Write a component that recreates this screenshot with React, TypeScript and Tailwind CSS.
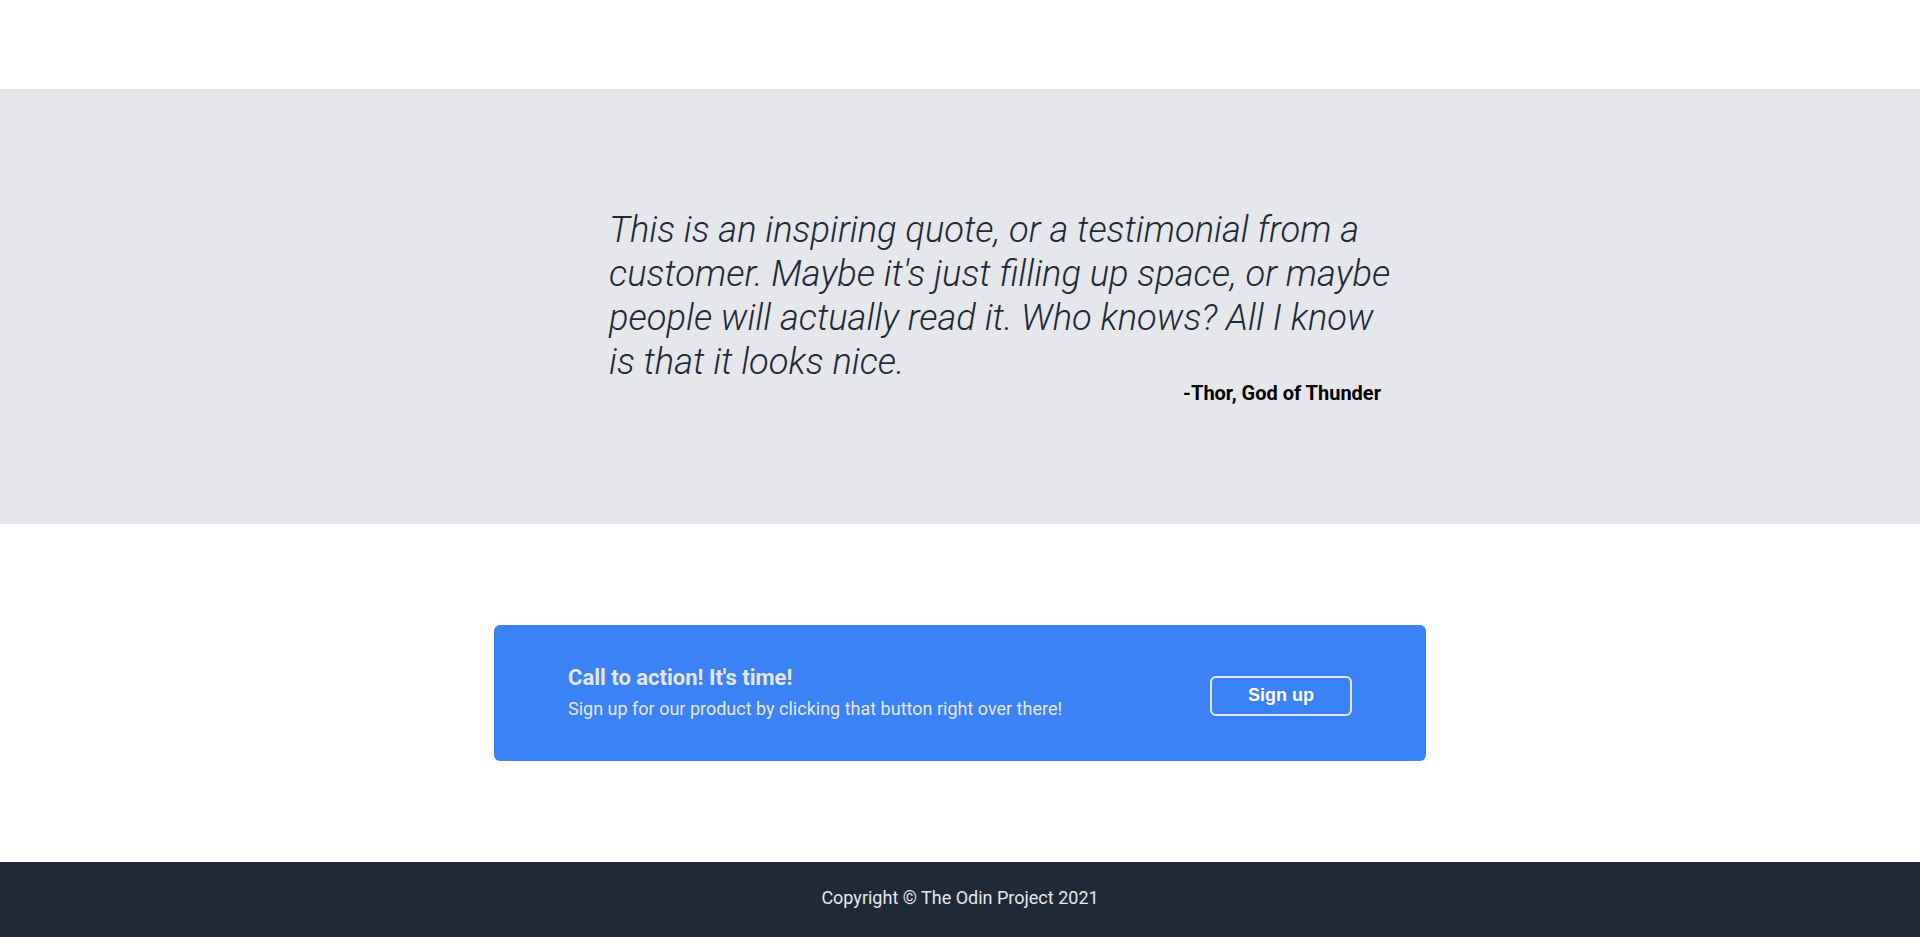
export default function App() {
  return (
    <div className="min-h-screen bg-white font-['Roboto',_'Liberation_Sans',_sans-serif]">
      {/* top spacer */}
      <div className="h-[89px]" />

      {/* Quote */}
      <section className="h-[435px] bg-[#e5e7eb] pt-[119px]">
        <div className="ml-[609px] w-[790px]">
          <p className="text-[36.3px] leading-[44px] italic font-light text-[#1f2937]">
            This is an inspiring quote, or a testimonial from a customer. Maybe it's just filling up space, or maybe people
            will actually read it. Who knows? All I know is that it looks nice.
          </p>
          <p className="-mt-[1px] text-right text-[20px] leading-5 font-bold text-black pr-[18px]">-Thor, God of Thunder</p>
        </div>
      </section>

      {/* Call to action */}
      <section className="h-[338px] flex items-center justify-center">
        <div className="w-[932px] h-[136px] bg-[#3b82f6] rounded-md flex items-center justify-between pl-[74px] pr-[74px]">
          <div className="text-[#e5e7eb]">
            <h3 className="text-[22px] font-bold leading-8">Call to action! It's time!</h3>
            <p className="text-[18px] leading-[30px]">Sign up for our product by clicking that button right over there!</p>
          </div>
          <button className="mt-[5px] w-[142px] h-[40px] border-2 border-[#e5e7eb] rounded-md text-white font-bold text-[18px] font-['Liberation_Sans',_Arial,_sans-serif]">
            Sign up
          </button>
        </div>
      </section>

      {/* Footer */}
      <footer className="h-[75px] pb-[4px] bg-[#1f2937] flex items-center justify-center text-[#e5e7eb] text-[18px]">
        Copyright © The Odin Project 2021
      </footer>
    </div>
  );
}
